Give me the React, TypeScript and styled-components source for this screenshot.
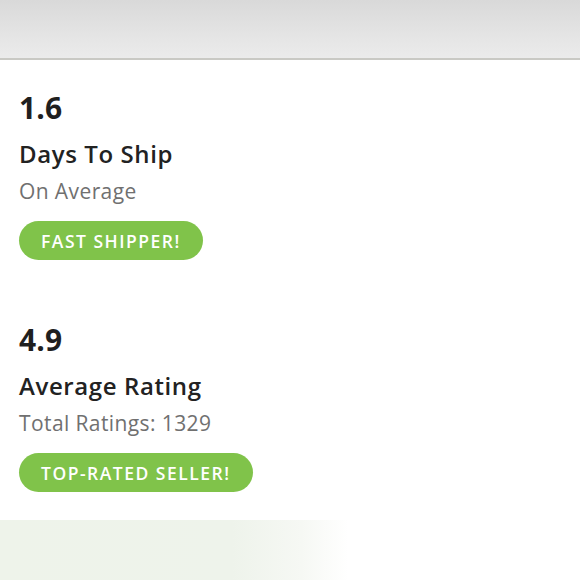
import React from "react";
import styled, { createGlobalStyle } from "styled-components";

const GlobalStyle = createGlobalStyle`
  html, body {
    margin: 0;
    padding: 0;
    background: #ffffff;
  }
  body {
    font-family: "Open Sans", "Liberation Sans", sans-serif;
    width: 580px;
    height: 580px;
    overflow: hidden;
  }
`;

type StatPT = {
  value: string;
  title: string;
  sub: string;
  badge: string;
};

const stats: StatPT[] = [
  { value: "1.6", title: "Days To Ship", sub: "On Average", badge: "FAST SHIPPER!" },
  { value: "4.9", title: "Average Rating", sub: "Total Ratings: 1329", badge: "TOP-RATED SELLER!" },
];

function Stat(props: StatPT) {
  return (
    <StyledStat>
      <Value>{props.value}</Value>
      <Title>{props.title}</Title>
      <Sub>{props.sub}</Sub>
      <Badge>{props.badge}</Badge>
    </StyledStat>
  );
}

export default function App() {
  return (
    <Page>
      <GlobalStyle />
      <TopBar />
      <Card>
        {stats.map((s, i) => (
          <React.Fragment key={s.value}>
            {i > 0 && <Divider />}
            <Stat {...s} />
          </React.Fragment>
        ))}
      </Card>
      <Footer />
    </Page>
  );
}

const Page = styled.div`
  display: flex;
  flex-direction: column;
  width: 580px;
  height: 580px;
`;

const TopBar = styled.div`
  height: 58px;
  background: linear-gradient(180deg, #d9d9d9 0%, #e6e6e6 70%, #ebebeb 100%);
  border-bottom: 2px solid #c9c9c4;
`;

const Card = styled.div`
  height: 460px;
  background: #ffffff;
  padding-left: 19px;
  display: flex;
  flex-direction: column;
`;

const StyledStat = styled.div`
  display: flex;
  flex-direction: column;
  align-items: flex-start;
  padding-top: 30px;
  padding-bottom: 32px;
`;

const Value = styled.div`
  font-size: 30px;
  font-weight: 700;
  color: #1f1f1f;
  line-height: 36px;
  letter-spacing: 0.2px;
`;

const Title = styled.div`
  margin-top: 13px;
  font-size: 24px;
  font-weight: 600;
  color: #222222;
  line-height: 30px;
  letter-spacing: 0.6px;
`;

const Sub = styled.div`
  margin-top: 8px;
  font-size: 21px;
  font-weight: 400;
  color: #707070;
  line-height: 28px;
  letter-spacing: 0.4px;
`;

const Badge = styled.div`
  margin-top: 16px;
  height: 39px;
  padding: 0 22px;
  border-radius: 20px;
  background: #80c34a;
  color: #ffffff;
  font-size: 17.5px;
  font-weight: 600;
  letter-spacing: 1.5px;
  display: flex;
  align-items: center;
`;

const Divider = styled.div`
  height: 2px;
  background: #e6e6df;
`;

const Footer = styled.div`
  flex: 1;
  background: linear-gradient(90deg, #eef3ea 0%, #eef3eb 40%, #f6f8f4 52%, #ffffff 60%);
`;
